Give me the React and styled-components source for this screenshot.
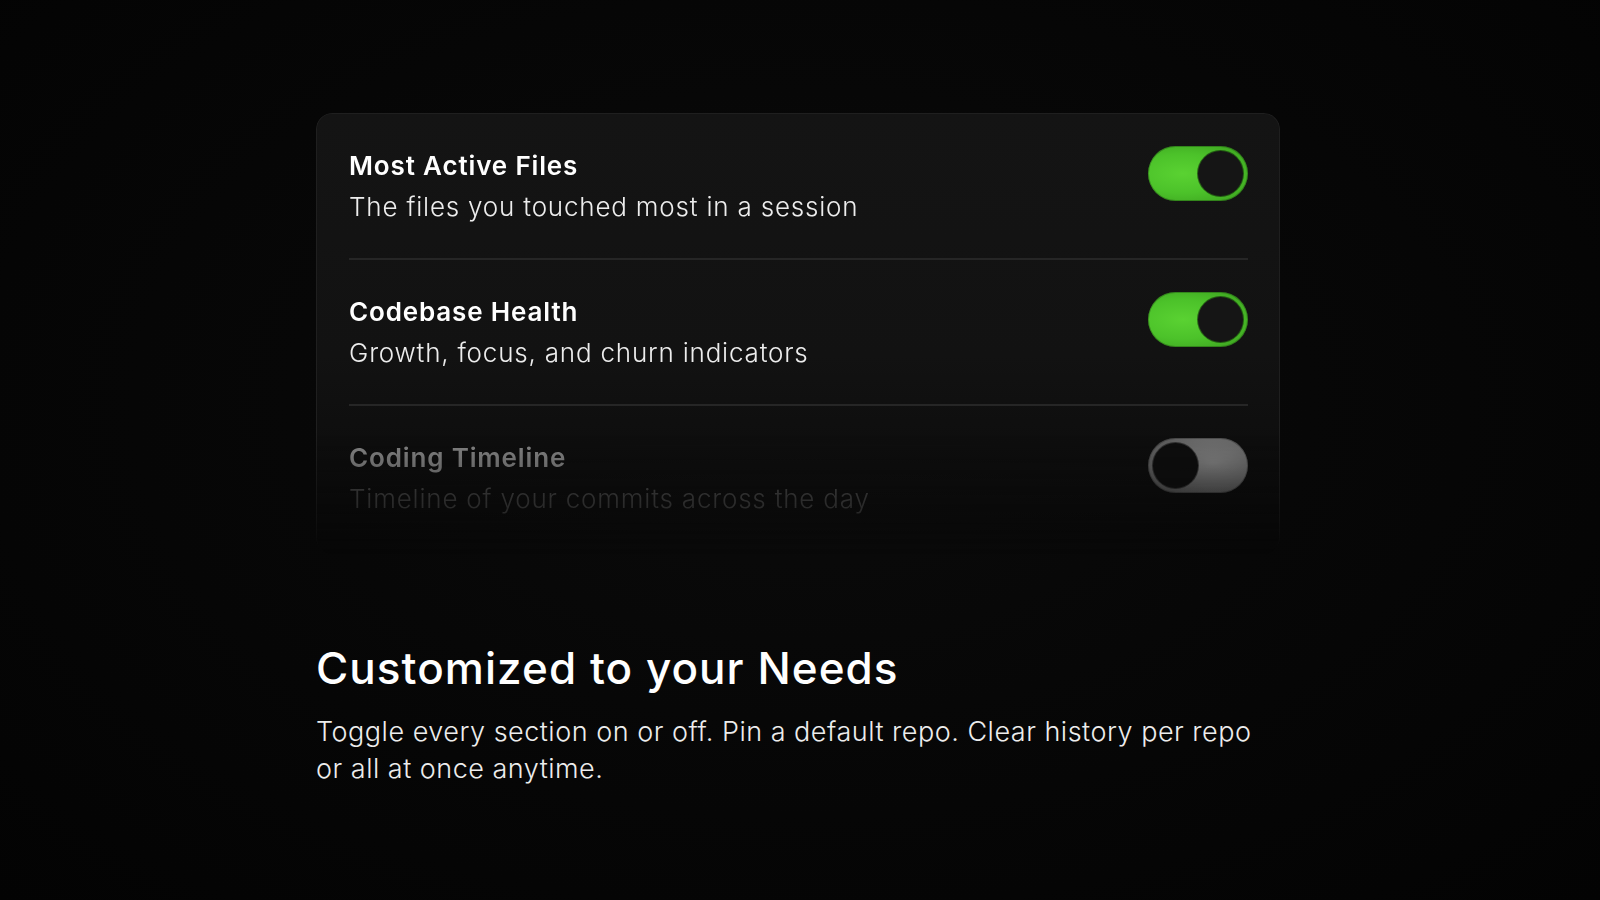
import React from "react";
import styled, { createGlobalStyle } from "styled-components";

const Global = createGlobalStyle`
  html, body { margin: 0; padding: 0; background: #050505; }
  body { font-family: Inter, "Open Sans", sans-serif; -webkit-font-smoothing: antialiased; }
  * { box-sizing: border-box; }
`;

const Page = styled.div`
  width: 1600px;
  height: 900px;
  overflow: hidden;
  background: radial-gradient(ellipse at 50% 45%, #0b0b0b 0%, #070707 45%, #030303 100%);
  padding: 113px 0 0 316px;
  display: flex;
  flex-direction: column;
`;

const Card = styled.div`
  width: 964px;
  border-radius: 16px;
  border: 1px solid #1f1f1f;
  border-bottom: none;
  background: linear-gradient(180deg, #141414 0%, #121212 55%, #0c0c0c 85%, #080808 100%);
  padding: 0 31px 4px 32px;
  -webkit-mask-image: linear-gradient(180deg, #000 0%, #000 72%, rgba(0,0,0,0.4) 92%, transparent 100%);
  mask-image: linear-gradient(180deg, #000 0%, #000 72%, rgba(0,0,0,0.4) 92%, transparent 100%);
`;

const Row = styled.div`
  display: flex;
  align-items: flex-start;
  justify-content: space-between;
  padding: 35px 0 34px;
  border-bottom: ${(p) => (p.$last ? "none" : "2px solid #262626")};
`;

const Texts = styled.div`
  display: flex;
  flex-direction: column;
  gap: 7px;
`;

const Title = styled.div`
  font-size: 26px;
  line-height: 34px;
  font-weight: 600;
  letter-spacing: 0.85px;
  color: ${(p) => (p.$dim ? "#8a8a8a" : "#ffffff")};
`;

const Subtitle = styled.div`
  font-size: 26px;
  line-height: 34px;
  font-weight: 300;
  letter-spacing: 0.8px;
  color: ${(p) => (p.$dim ? "#4d4d4d" : "#ededed")};
`;

const Track = styled.div`
  width: 100px;
  height: 55px;
  margin-top: -3px;
  border-radius: 28px;
  padding: 5px;
  display: flex;
  justify-content: ${(p) => (p.$on ? "flex-end" : "flex-start")};
  background: ${(p) =>
    p.$on
      ? "radial-gradient(ellipse at 35% 50%, #5ad232 0%, #4cc22a 50%, #3a9e1e 100%)"
      : "radial-gradient(ellipse at 65% 45%, #8a8a8a 0%, #6e6e6e 55%, #505050 100%)"};
  box-shadow: inset 0 0 0 1px rgba(0,0,0,0.25);
  flex-shrink: 0;
`;

const Knob = styled.div`
  width: 45px;
  height: 45px;
  border-radius: 50%;
  background: ${(p) => (p.$on ? "#151515" : "#0e0e0e")};
  box-shadow: 0 0 0 1px rgba(0,0,0,0.5);
`;

const Heading = styled.h2`
  margin: 86px 0 0;
  font-size: 44px;
  line-height: 56px;
  font-weight: 500;
  color: #ffffff;
  letter-spacing: 1.05px;
`;

const Paragraph = styled.p`
  margin: 17px 0 0;
  width: 950px;
  font-size: 27px;
  line-height: 37px;
  font-weight: 300;
  color: #ededed;
  letter-spacing: 0.5px;
`;

const Toggle = ({ on }) => (
  <Track $on={on}>
    <Knob $on={on} />
  </Track>
);

const rows = [
  { title: "Most Active Files", sub: "The files you touched most in a session", on: true },
  { title: "Codebase Health", sub: "Growth, focus, and churn indicators", on: true },
  { title: "Coding Timeline", sub: "Timeline of your commits across the day", on: false },
];

export default function App() {
  return (
    <>
      <Global />
      <Page>
        <Card>
          {rows.map((r, i) => (
            <Row key={r.title} $last={i === rows.length - 1}>
              <Texts>
                <Title $dim={!r.on}>{r.title}</Title>
                <Subtitle $dim={!r.on}>{r.sub}</Subtitle>
              </Texts>
              <Toggle on={r.on} />
            </Row>
          ))}
        </Card>
        <Heading>Customized to your Needs</Heading>
        <Paragraph>
          Toggle every section on or off. Pin a default repo. Clear history per repo or all at once anytime.
        </Paragraph>
      </Page>
    </>
  );
}
